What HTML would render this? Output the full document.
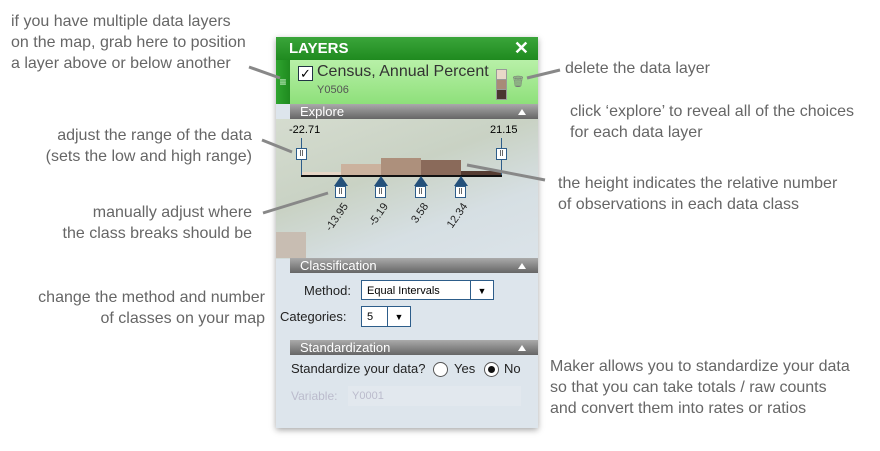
<!DOCTYPE html>
<html><head><style>
body{margin:0;width:880px;height:451px;background:#fff;position:relative;overflow:hidden;font-family:"Liberation Sans",sans-serif}
.a{position:absolute;color:#666;font-size:16px;line-height:21px;white-space:nowrap}
.r{text-align:right}
.p{position:absolute;left:276px;top:37px;width:262px;height:391px;background:#dde5ec;box-shadow:0 2px 6px rgba(0,0,0,.35)}
.bar{position:absolute;left:14px;width:248px;height:15px;background:linear-gradient(#aaa,#666);color:#fff;font-size:13px;line-height:15px;padding-left:10px;box-sizing:border-box}
.bar:after{content:"";position:absolute;right:12px;top:5px;border-left:4px solid transparent;border-right:4px solid transparent;border-bottom:6px solid #fff}
.abs{position:absolute}
.h{position:absolute;width:9px;height:10px;border:1px solid #2d5d8a;background:#fff;font-size:8px;line-height:10px;text-align:center;color:#333}
.tri{position:absolute;border-left:7px solid transparent;border-right:7px solid transparent;border-bottom:10px solid #24507a}
.lbl{position:absolute;font-size:11px;transform:rotate(-55deg);transform-origin:right top;color:#222}
</style></head><body>
<div class="a" style="left:11px;top:11px">if you have multiple data layers<br>on the map, grab here to position<br>a layer above or below another</div>
<div class="a r" style="right:628px;top:125px">adjust the range of the data<br>(sets the low and high range)</div>
<div class="a r" style="right:628px;top:202px">manually adjust where<br>the class breaks should be</div>
<div class="a r" style="right:615px;top:287px">change the method and number<br>of classes on your map</div>
<div class="a" style="left:565px;top:58px">delete the data layer</div>
<div class="a" style="left:570px;top:101px">click ‘explore’ to reveal all of the choices<br>for each data layer</div>
<div class="a" style="left:558px;top:173px">the height indicates the relative number<br>of observations in each data class</div>
<div class="a" style="left:550px;top:356px">Maker allows you to standardize your data<br>so that you can take totals / raw counts<br>and convert them into rates or ratios</div>

<div class="p">
 <div class="abs" style="left:0;top:82px;width:262px;height:140px;background:linear-gradient(160deg,#d5dccf 0%,#c9d2c4 40%,#d6dfe3 70%,#dbe3e9 100%)"></div>
 <div class="abs" style="left:0;top:195px;width:30px;height:26px;background:#c8bdb2"></div>
 <div class="abs" style="left:0;top:0;width:262px;height:23px;background:linear-gradient(#3aa53a,#1f8a1f);color:#fff;font-weight:bold;font-size:15px;line-height:23px;padding-left:13px;box-sizing:border-box">LAYERS<span style="position:absolute;right:9px;top:0;font-size:18px">✕</span></div>
 <div class="abs" style="left:0;top:23px;width:14px;height:44px;background:linear-gradient(90deg,#2fa52f,#1f8a1f);color:#e8ffe8;font-size:12px;line-height:44px;text-align:center">≡</div>
 <div class="abs" style="left:14px;top:23px;width:248px;height:44px;background:linear-gradient(#b8f0a8,#8ee07a)">
  <div class="abs" style="left:8px;top:6px;width:13px;height:13px;border:1px solid #234;background:#fff;font-size:13px;line-height:13px;text-align:center;color:#000">✓</div>
  <div class="abs" style="left:27px;top:3px;font-size:16px;color:#333">Census, Annual Percent</div>
  <div class="abs" style="left:27px;top:24px;font-size:11px;color:#555">Y0506</div>
  <div class="abs" style="left:206px;top:9px;width:9px;height:9px;background:#e8d8c8;border:1px solid #999"></div>
  <div class="abs" style="left:206px;top:19px;width:9px;height:9px;background:#a88a78;border:1px solid #999"></div>
  <div class="abs" style="left:206px;top:29px;width:9px;height:9px;background:#4a3630;border:1px solid #999"></div>
  <div class="abs" style="left:221px;top:15px;font-size:11px;color:#777">🗑</div>
 </div>
 <div class="bar" style="top:67px">Explore</div>
 <div class="abs" style="left:13px;top:87px;font-size:11px">-22.71</div>
 <div class="abs" style="left:214px;top:87px;font-size:11px">21.15</div>
 <div class="abs" style="left:25px;top:101px;width:1px;height:37px;background:#2d5d8a"></div>
 <div class="abs" style="left:225px;top:101px;width:1px;height:37px;background:#2d5d8a"></div>
 <div class="h" style="left:20px;top:111px">II</div>
 <div class="h" style="left:220px;top:111px">II</div>
 <div class="abs" style="left:26px;top:135px;width:39px;height:3px;background:#e6d6c6"></div>
 <div class="abs" style="left:65px;top:127px;width:40px;height:11px;background:#cbb29e"></div>
 <div class="abs" style="left:105px;top:121px;width:40px;height:17px;background:#ad907c"></div>
 <div class="abs" style="left:145px;top:123px;width:40px;height:15px;background:#8a6a5a"></div>
 <div class="abs" style="left:185px;top:134px;width:40px;height:4px;background:#553c32"></div>
 <div class="abs" style="left:25px;top:138px;width:201px;height:2px;background:#111"></div>
 <div class="tri" style="left:58px;top:139px"></div><div class="h" style="left:59px;top:149px">II</div>
 <div class="tri" style="left:98px;top:139px"></div><div class="h" style="left:99px;top:149px">II</div>
 <div class="tri" style="left:138px;top:139px"></div><div class="h" style="left:139px;top:149px">II</div>
 <div class="tri" style="left:178px;top:139px"></div><div class="h" style="left:179px;top:149px">II</div>
 <div class="lbl" style="right:197px;top:164px">-13.95</div>
 <div class="lbl" style="right:157px;top:164px">-5.19</div>
 <div class="lbl" style="right:117px;top:164px">3.58</div>
 <div class="lbl" style="right:77px;top:164px">12.34</div>
 <div class="bar" style="top:221px">Classification</div>
 <div class="abs" style="left:28px;top:246px;font-size:13px;color:#222">Method:</div>
 <div class="abs" style="left:85px;top:243px;width:133px;height:20px;border:1px solid #2d5d8a;background:#fff;box-sizing:border-box;font-size:11px;line-height:20px;padding-left:5px">Equal Intervals<div class="abs" style="right:0;top:0;width:22px;height:18px;border-left:1px solid #2d5d8a;font-size:9px;text-align:center">▼</div></div>
 <div class="abs" style="left:4px;top:272px;font-size:13px;color:#222">Categories:</div>
 <div class="abs" style="left:85px;top:269px;width:50px;height:21px;border:1px solid #2d5d8a;background:#fff;box-sizing:border-box;font-size:11px;line-height:21px;padding-left:5px">5<div class="abs" style="right:0;top:0;width:22px;height:19px;border-left:1px solid #2d5d8a;font-size:9px;text-align:center">▼</div></div>
 <div class="bar" style="top:303px">Standardization</div>
 <div class="abs" style="left:15px;top:324px;font-size:13px;color:#222">Standardize your data?</div>
 <div class="abs" style="left:157px;top:325px;width:13px;height:13px;border:1px solid #555;border-radius:50%;background:#fff"></div>
 <div class="abs" style="left:178px;top:324px;font-size:13px;color:#222">Yes</div>
 <div class="abs" style="left:208px;top:325px;width:13px;height:13px;border:1px solid #555;border-radius:50%;background:#fff"><div class="abs" style="left:3px;top:3px;width:7px;height:7px;border-radius:50%;background:#111"></div></div>
 <div class="abs" style="left:228px;top:324px;font-size:13px;color:#222">No</div>
 <div class="abs" style="left:15px;top:352px;font-size:12px;color:#bbc">Variable:</div>
 <div class="abs" style="left:72px;top:349px;width:169px;height:20px;background:#e2e8ee;font-size:11px;line-height:20px;padding-left:4px;color:#bbc">Y0001</div>
</div>
<svg class="abs" style="left:0;top:0" width="880" height="451"><g stroke="#888" stroke-width="3">
<line x1="249" y1="67" x2="280" y2="78"/><line x1="262" y1="140" x2="292" y2="152"/>
<line x1="263" y1="213" x2="328" y2="193"/><line x1="527" y1="78" x2="560" y2="70"/>
<line x1="467" y1="165" x2="545" y2="180"/></g></svg>
</body></html>
